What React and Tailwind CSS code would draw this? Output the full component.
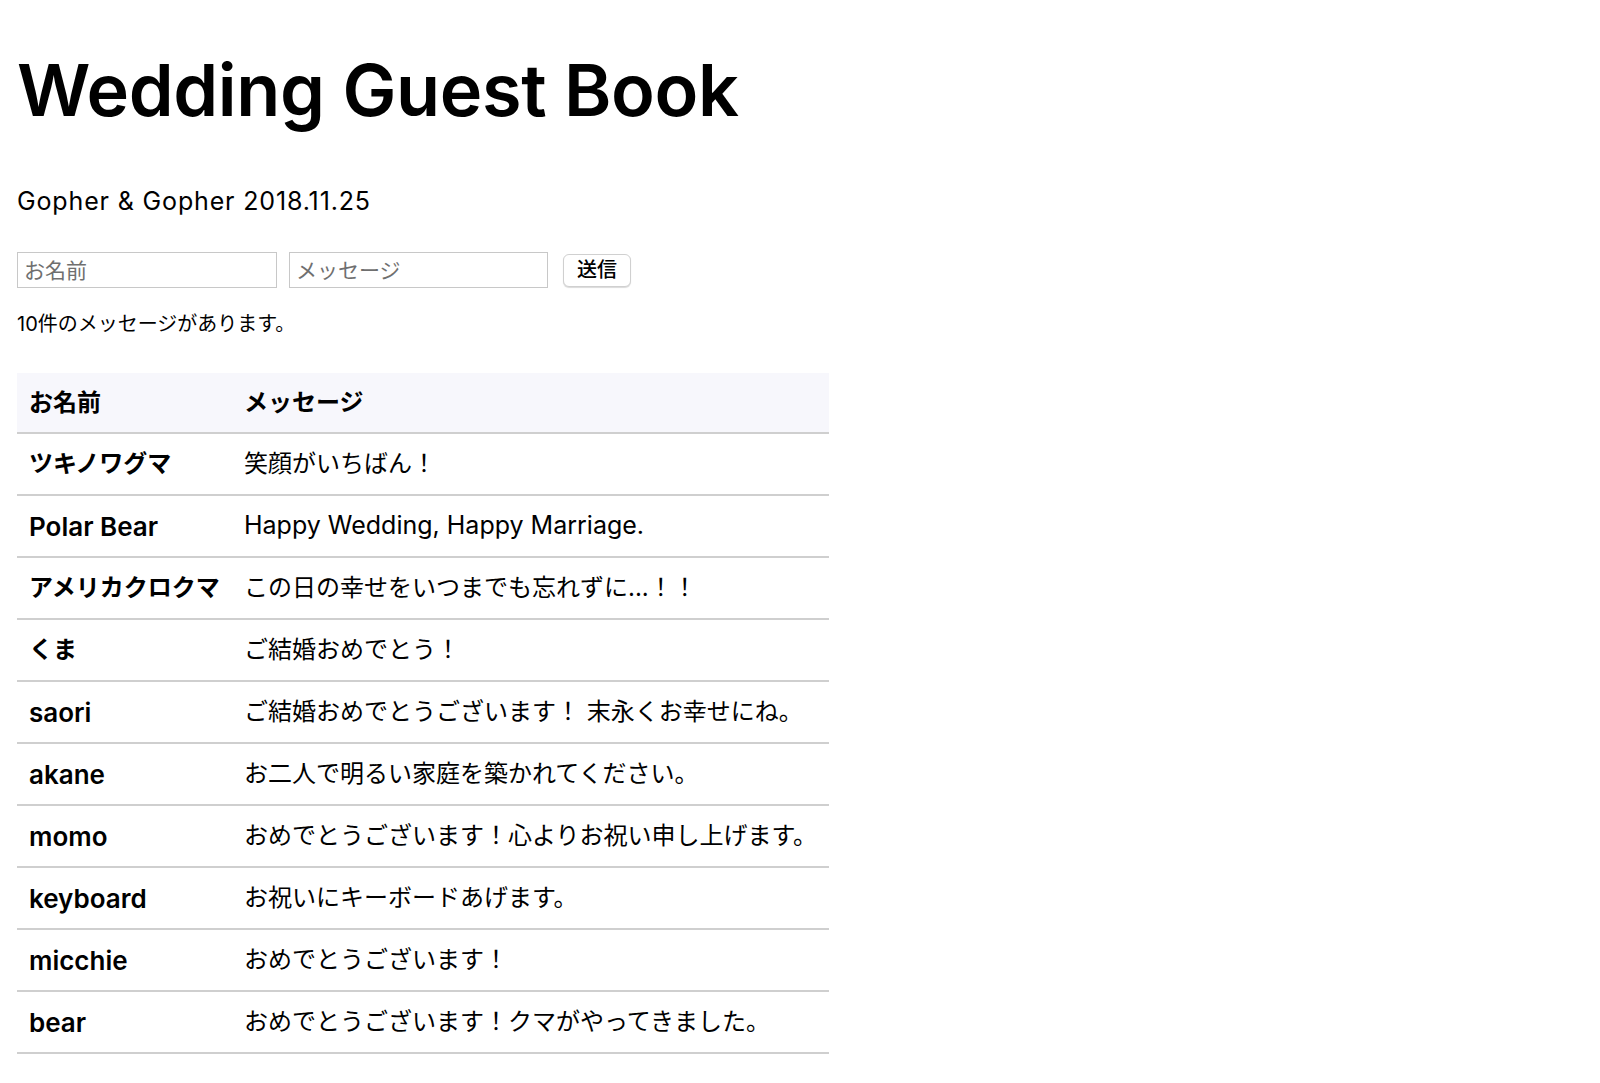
import React from "react";

const messages = [
  { name: "ツキノワグマ", body: "笑顔がいちばん！" },
  { name: "Polar Bear", body: "Happy Wedding, Happy Marriage." },
  { name: "アメリカクロクマ", body: "この日の幸せをいつまでも忘れずに...！！" },
  { name: "くま", body: "ご結婚おめでとう！" },
  { name: "saori", body: "ご結婚おめでとうございます！ 末永くお幸せにね。" },
  { name: "akane", body: "お二人で明るい家庭を築かれてください。" },
  { name: "momo", body: "おめでとうございます！心よりお祝い申し上げます。" },
  { name: "keyboard", body: "お祝いにキーボードあげます。" },
  { name: "micchie", body: "おめでとうございます！" },
  { name: "bear", body: "おめでとうございます！クマがやってきました。" },
];

// latin-only strings render a bit larger, like the original font did
const isLatin = (s) => /^[\x00-\x7F]+$/.test(s);

const App = () => {
  return (
    <div className="min-h-screen bg-white pl-[17px] text-black font-['Inter','Noto_Sans_CJK_JP',sans-serif]">
      <h1 className="pt-[54px] text-[72px] font-semibold leading-none tracking-[-0.005em]">
        Wedding Guest Book
      </h1>
      <p className="mt-[63px] text-[25px] leading-none tracking-[0.85px]">Gopher &amp; Gopher 2018.11.25</p>

      <form className="mt-[38px] flex items-center" onSubmit={(e) => e.preventDefault()}>
        <input
          type="text"
          placeholder="お名前"
          className="h-[36px] w-[260px] border border-[#c8c8c8] px-[6px] text-[21px] placeholder:text-[#6f6f6f] outline-none"
        />
        <input
          type="text"
          placeholder="メッセージ"
          className="ml-[12px] h-[36px] w-[259px] border border-[#c8c8c8] px-[6px] text-[21px] placeholder:text-[#6f6f6f] outline-none"
        />
        <button
          type="submit"
          className="ml-[15px] h-[33px] w-[68px] rounded-[6px] border border-[#d0d0d0] bg-white text-[20px] font-medium leading-none shadow-[0_1px_1px_rgba(0,0,0,0.15)]"
        >
          送信
        </button>
      </form>

      <p className="mt-[26px] text-[20px] leading-none">10件のメッセージがあります。</p>

      <table className="mt-[39px] w-[812px] border-collapse text-left text-[24px]">
        <thead>
          <tr className="h-[60px] border-b-2 border-[#cfcfcf] bg-[#f7f7fc]">
            <th className="w-[215px] pl-[12px] font-bold">お名前</th>
            <th className="pl-[12px] font-bold">メッセージ</th>
          </tr>
        </thead>
        <tbody>
          {messages.map((m) => (
            <tr key={m.name} className="h-[62px] border-b-2 border-[#cfcfcf]">
              <td
                className={
                  isLatin(m.name)
                    ? "pl-[12px] text-[26px] font-semibold whitespace-nowrap"
                    : "pl-[12px] font-bold whitespace-nowrap"
                }
              >
                {m.name}
              </td>
              <td className={isLatin(m.body) ? "pl-[12px] text-[25px] whitespace-nowrap" : "pl-[12px] whitespace-nowrap"}>
                {m.body}
              </td>
            </tr>
          ))}
        </tbody>
      </table>
    </div>
  );
};

export default App;
